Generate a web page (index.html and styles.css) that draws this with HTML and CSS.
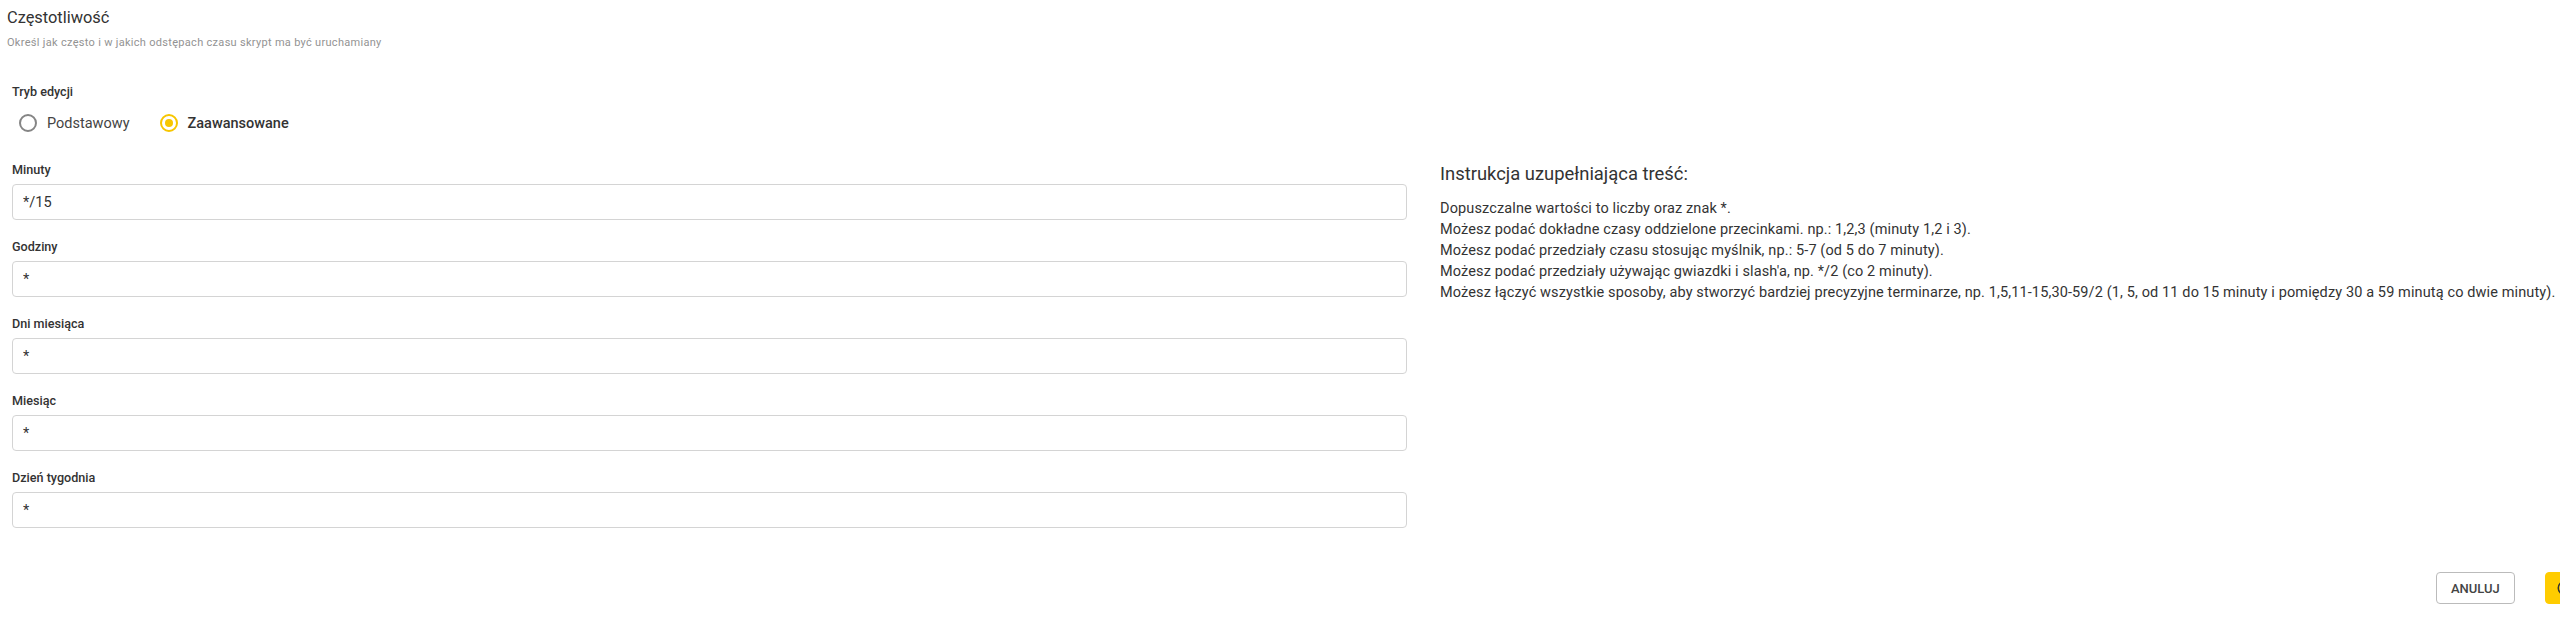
FILE: index.html
```html
<!DOCTYPE html>
<html lang="pl">
<head>
    <meta charset="UTF-8">
    <meta name="viewport" content="width=device-width, initial-scale=1.0">
    <title>Częstotliwość</title>
    <link rel="stylesheet" href="styles.css">
</head>
<body>
    <header class="section-head">
        <h2>Częstotliwość</h2>
        <p>Określ jak często i w jakich odstępach czasu skrypt ma być uruchamiany</p>
    </header>

    <div class="mode">
        <div class="field-label">Tryb edycji</div>
        <div class="radios">
            <label class="radio">
                <span class="dot"></span>
                Podstawowy
            </label>
            <label class="radio checked">
                <span class="dot"></span>
                Zaawansowane
            </label>
        </div>
    </div>

    <div class="columns">
        <div class="fields">
            <div class="field">
                <label class="field-label">Minuty</label>
                <input type="text" value="*/15">
            </div>
            <div class="field">
                <label class="field-label">Godziny</label>
                <input type="text" value="*">
            </div>
            <div class="field">
                <label class="field-label">Dni miesiąca</label>
                <input type="text" value="*">
            </div>
            <div class="field">
                <label class="field-label">Miesiąc</label>
                <input type="text" value="*">
            </div>
            <div class="field">
                <label class="field-label">Dzień tygodnia</label>
                <input type="text" value="*">
            </div>
        </div>

        <div class="help">
            <h3>Instrukcja uzupełniająca treść:</h3>
            <p>Dopuszczalne wartości to liczby oraz znak *.</p>
            <p>Możesz podać dokładne czasy oddzielone przecinkami. np.: 1,2,3 (minuty 1,2 i 3).</p>
            <p>Możesz podać przedziały czasu stosując myślnik, np.: 5-7 (od 5 do 7 minuty).</p>
            <p>Możesz podać przedziały używając gwiazdki i slash'a, np. */2 (co 2 minuty).</p>
            <p>Możesz łączyć wszystkie sposoby, aby stworzyć bardziej precyzyjne terminarze, np. 1,5,11-15,30-59/2 (1, 5, od 11 do 15 minuty i pomiędzy 30 a 59 minutą co dwie minuty).</p>
        </div>
    </div>

    <footer class="actions">
        <button class="btn">Anuluj</button>
        <button class="btn primary">
            <svg width="18" height="18" viewBox="0 0 24 24"><circle cx="12" cy="12" r="9" fill="none" stroke="#333" stroke-width="2"/><path d="M8 12.5l3 3 5-6" fill="none" stroke="#333" stroke-width="2"/></svg>
            Zapisz
        </button>
    </footer>
</body>
</html>
```

FILE: styles.css
```css
body {
    margin: 0;
    background-color: #fff;
    font-family: Roboto, 'Noto Sans', sans-serif;
    color: #333;
    overflow: hidden;
}

/* Header */
.section-head {
    padding: 8px 0 0 7px;
}

.section-head h2 {
    margin: 0;
    font-size: 16.4px;
    line-height: 20px;
    font-weight: 400;
    color: #333;
}

.section-head p {
    margin: 8px 0 0;
    font-size: 11px;
    line-height: 14px;
    letter-spacing: 0.3px;
    color: #939393;
}

.field-label {
    display: block;
    font-size: 12.6px;
    line-height: 16px;
    font-weight: 500;
    color: #333;
}

/* Edit mode */
.mode {
    padding: 34px 0 0 12px;
}

.radios {
    display: flex;
    align-items: center;
    height: 24px;
    margin-top: 11px;
    padding-left: 7px;
}

.radio {
    display: flex;
    align-items: center;
    gap: 10px;
    margin-right: 30px;
    font-size: 14.5px;
    color: #444;
}

.radio .dot {
    box-sizing: border-box;
    width: 18px;
    height: 18px;
    border: 2px solid #858585;
    border-radius: 50%;
    position: relative;
}

.radio.checked {
    font-weight: 500;
    color: #333;
}

.radio.checked .dot {
    border-color: #f7c600;
}

.radio.checked .dot::after {
    content: "";
    position: absolute;
    top: 3px;
    left: 3px;
    width: 8px;
    height: 8px;
    border-radius: 50%;
    background-color: #f7c600;
}

/* Fields and help */
.columns {
    display: grid;
    grid-template-columns: 1395px 1fr;
    gap: 33px;
    padding: 27px 0 0 12px;
}

.field {
    margin-bottom: 19px;
}

.field .field-label {
    margin-bottom: 6px;
}

.field input {
    box-sizing: border-box;
    width: 100%;
    height: 36px;
    padding: 0 10px;
    border: 1px solid #d4d4d4;
    border-radius: 4px;
    font-family: inherit;
    font-size: 14.5px;
    color: #333;
    outline: none;
}

.help h3 {
    margin: 0;
    font-size: 18.4px;
    line-height: 24px;
    font-weight: 400;
    color: #333;
}

.help p {
    margin: 0;
    font-size: 14.5px;
    line-height: 21px;
    letter-spacing: 0.12px;
    color: #333;
    white-space: nowrap;
}

.help h3 + p {
    margin-top: 12px;
}

/* Footer buttons */
.actions {
    display: flex;
    justify-content: flex-end;
    gap: 30px;
    margin: 25px -81px 0 0;
}

.btn {
    box-sizing: border-box;
    height: 32px;
    padding: 0 14px;
    border: 1px solid #bbb;
    border-radius: 4px;
    background-color: #fff;
    font-family: inherit;
    font-size: 13px;
    font-weight: 500;
    text-transform: uppercase;
    color: #444;
}

.btn.primary {
    display: flex;
    align-items: center;
    gap: 8px;
    padding: 0 14px 0 10px;
    border-color: #ffcc00;
    background-color: #ffcc00;
    color: #333;
}
```
